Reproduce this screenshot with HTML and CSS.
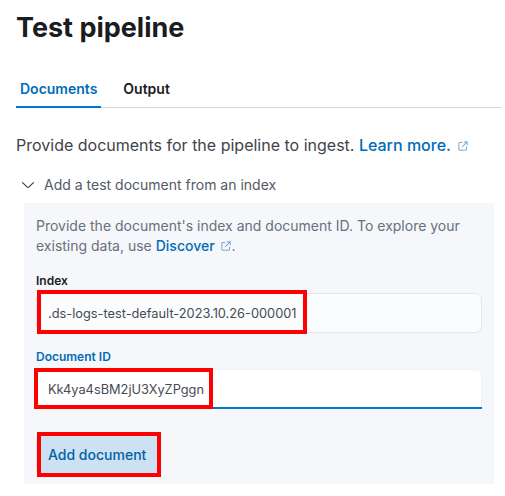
FILE: index.html
```html
<!DOCTYPE html>
<html>
<head>
<meta charset="utf-8">
<link rel="stylesheet" href="styles.css">
</head>
<body>
<div class="page">
  <h1 class="title">Test pipeline</h1>
  <div class="tabs">
    <div class="tab tab-active">Documents</div>
    <div class="tab">Output</div>
  </div>
  <p class="intro">Provide documents for the pipeline to ingest. <a class="link">Learn more.</a><svg class="ext" viewBox="0 0 16 16" width="12" height="12"><path fill="currentColor" d="M9 2v1h3.3L6.6 8.7l.7.7L13 3.7V7h1V2H9zM12 13H3V4h4V3H3a1 1 0 00-1 1v9a1 1 0 001 1h9a1 1 0 001-1V9h-1v4z"/></svg></p>
  <div class="acc-btn">
    <svg class="chev" viewBox="0 0 16 16" width="16" height="16"><path fill="currentColor" d="M13.069 5.157L8.384 9.768a.546.546 0 01-.768 0L2.93 5.158a.552.552 0 00-.771 0 .53.53 0 000 .759l4.684 4.61c.641.631 1.672.63 2.312 0l4.684-4.61a.53.53 0 000-.76.552.552 0 00-.771 0z"/></svg>
    <span>Add a test document from an index</span>
  </div>
  <div class="panel">
    <p class="help">Provide the document's index and document ID. To explore your existing data, use <a class="link">Discover</a><svg class="ext ext-sm" viewBox="0 0 16 16" width="12" height="12"><path fill="currentColor" d="M9 2v1h3.3L6.6 8.7l.7.7L13 3.7V7h1V2H9zM12 13H3V4h4V3H3a1 1 0 00-1 1v9a1 1 0 001 1h9a1 1 0 001-1V9h-1v4z"/></svg>.</p>
    <div class="row row-first">
      <label class="label">Index</label>
      <div class="field">
        <div class="input">.ds-logs-test-default-2023.10.26-000001</div>
        <span class="mark mark-index"></span>
      </div>
    </div>
    <div class="row">
      <label class="label label-focus">Document ID</label>
      <div class="field">
        <div class="input input-focus">Kk4ya4sBM2jU3XyZPggn</div>
        <span class="mark mark-id"></span>
      </div>
    </div>
    <div class="btn-wrap">
      <button class="btn">Add document</button>
      <span class="mark mark-btn"></span>
    </div>
  </div>
</div>
</body>
</html>
```
FILE: styles.css
```css
* { box-sizing: border-box; }
html, body { margin: 0; padding: 0; background: #fff; }
body { font-family: Inter, "Noto Sans", sans-serif; color: #343741; }
.page { padding: 0 3px 0 16px; }
.title {
  margin: 12px 0 0;
  font-size: 27px;
  line-height: 32px;
  font-weight: 700;
  color: #1a1c21;
}
.tabs {
  display: flex;
  gap: 18px;
  margin-top: 26px;
  border-bottom: 1px solid #d3dae6;
}
.tab {
  position: relative;
  padding: 9px 4px 8px;
  font-size: 14px;
  line-height: 20px;
  font-weight: 600;
  color: #1a1c21;
}
.tab-active { color: #006bb8; }
.tab-active::after {
  content: "";
  position: absolute;
  left: 0; right: 0; bottom: -1px;
  height: 2px;
  background: #0077cc;
}
.intro {
  margin: 25px 0 0;
  font-size: 16px;
  line-height: 24px;
  color: #3f434c;
}
.link { color: #006bb8; font-weight: 500; text-decoration: none; }
.ext { color: #4a90d0; margin-left: 6px; vertical-align: -1px; }
.ext-sm { margin-left: 5px; vertical-align: -1px; }
.acc-btn {
  display: flex;
  align-items: center;
  gap: 8px;
  margin-top: 18px;
  padding-left: 4px;
  font-size: 14px;
  line-height: 20px;
  color: #535966;
}
.chev { color: #343741; }
.panel {
  margin: 8px 8px 0 8px;
  background: #f5f7fa;
  padding: 13px 12px 10px;
}
.help {
  margin: 0;
  font-size: 14px;
  line-height: 20px;
  color: #69707d;
}
.row { margin-top: 15px; }
.row-first { margin-top: 16px; }
.label {
  display: block;
  font-size: 12px;
  line-height: 18px;
  font-weight: 600;
  color: #1a1c21;
  margin-bottom: 3px;
}
.label-focus { color: #006bb8; }
.field { position: relative; }
.input {
  height: 40px;
  padding: 0 12px;
  display: flex;
  align-items: center;
  font-size: 12.8px;
  color: #464a54;
  background: #fbfcfd;
  border-radius: 6px;
  box-shadow: inset 0 0 0 1px rgba(17, 42, 134, 0.1);
}
.input-focus {
  background: #fff;
  border-radius: 6px 6px 0 0;
  box-shadow: inset 0 -2px 0 0 #0077cc, inset 0 0 0 1px rgba(17, 42, 134, 0.06);
}
.mark {
  position: absolute;
  border: 4px solid #ff0000;
  pointer-events: none;
}
.mark-index { left: 1px; top: -3px; width: 270px; height: 44px; }
.mark-id { left: -2px; top: -1px; width: 179px; height: 41px; }
.btn-wrap { position: relative; display: inline-block; margin-top: 25px; }
.btn {
  display: block;
  height: 40px;
  padding: 0 12px;
  border: none;
  border-radius: 6px;
  background: #cce1f2;
  color: #0061a6;
  font-family: Inter, "Noto Sans", sans-serif;
  font-size: 14px;
  font-weight: 500;
}
.mark-btn { left: 1px; top: -2px; right: -3px; bottom: -3px; }
```
